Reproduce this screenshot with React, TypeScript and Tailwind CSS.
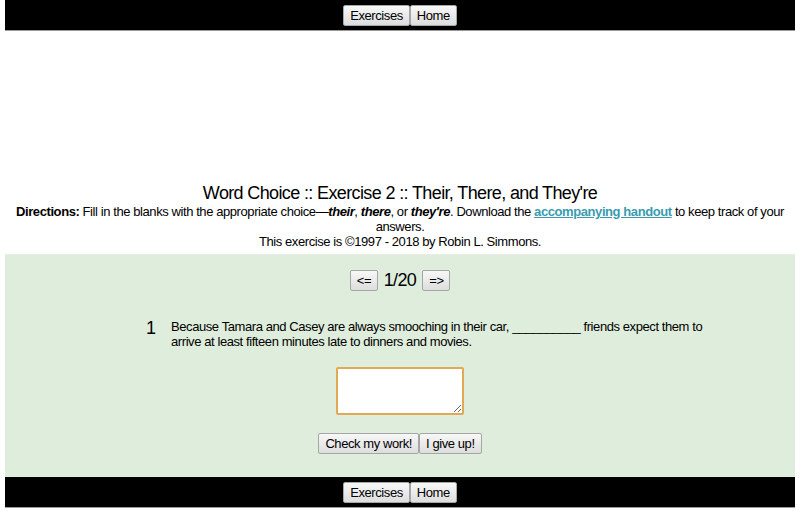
import React from 'react';

const btn =
  'inline-block px-[6px] h-[21px] text-[13px] leading-[19px] text-black bg-gradient-to-b from-[#f8f8f8] to-[#dddddd] border border-[#a6a6a6] rounded-[2px]';

const NavBar: React.FC = () => (
  <div className="h-[31px] bg-black border-b border-[#9a9a9a] flex justify-center items-center">
    <button className={btn}>Exercises</button>
    <button className={btn}>Home</button>
  </div>
);

const App: React.FC = () => {
  return (
    <div className="min-h-screen bg-white font-['Liberation_Sans',Arial,sans-serif] tracking-[-0.026em] text-black">
      <div className="mx-[5px]">
        <NavBar />

        <div className="h-[152px]" />

        <div className="text-center">
          <h1 className="text-[18px] leading-[20px] font-normal tracking-[-0.035em]">
            Word Choice :: Exercise 2 :: Their, There, and They're
          </h1>
          <p className="text-[13px] leading-[15px] mt-[1px] px-[10px]">
            <b>Directions:</b> Fill in the blanks with the appropriate choice—<b><i>their</i></b>,{' '}
            <b><i>there</i></b>, or <b><i>they're</i></b>. Download the{' '}
            <a href="#" className="font-bold text-[#3a9bb0] underline">
              accompanying handout
            </a>{' '}
            to keep track of your answers.
          </p>
          <p className="text-[13px] leading-[15px]">This exercise is ©1997 - 2018 by Robin L. Simmons.</p>
        </div>

        <div className="mt-[5px] bg-[#dfeddc] border-t border-[#e8f0e6] h-[223px] pt-[15px]">
          <div className="flex justify-center items-center gap-[6px] h-[20px]">
            <button className={btn + ' w-[28px] px-0'}>&lt;=</button>
            <span className="text-[18px] leading-[20px] tracking-[-0.035em]">1/20</span>
            <button className={btn + ' w-[28px] px-0'}>=&gt;</button>
          </div>

          <div className="flex mt-[28px] pl-[136px]">
            <div className="w-[30px] text-[18px] leading-[20px] pl-[5px]">1</div>
            <p className="w-[550px] text-[13px] leading-[15px] pt-[1px]">
              Because Tamara and Casey are always smooching in their car, __________ friends expect them to
              arrive at least fifteen minutes late to dinners and movies.
            </p>
          </div>

          <div className="flex justify-center mt-[18px]">
            <textarea
              autoFocus
              className="w-[128px] h-[48px] px-[2px] bg-white border-2 border-[#e1a954] rounded-[2px] outline-none resize-y caret-black"
              defaultValue=""
            />
          </div>

          <div className="flex justify-center mt-[18px]">
            <button className={btn}>Check my work!</button>
            <button className={btn}>I give up!</button>
          </div>
        </div>

        <NavBar />
      </div>
    </div>
  );
};

export default App;
